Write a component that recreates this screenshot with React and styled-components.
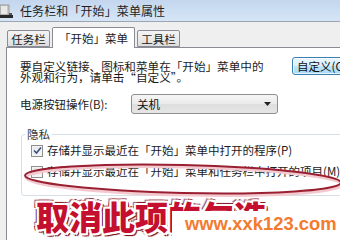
import React from 'react';
import styled, { createGlobalStyle } from 'styled-components';

const GlobalStyle = createGlobalStyle`
  html, body {
    margin: 0;
    padding: 0;
    background: #f0f0f0;
  }
  body {
    font-family: "Noto Sans CJK SC", "Liberation Sans", sans-serif;
  }
`;

const Window = styled.div`
  position: relative;
  width: 340px;
  height: 240px;
  overflow: hidden;
  background: #efefef;
  display: flex;
  flex-direction: column;
`;

const TitleBar = styled.div`
  height: 22px;
  flex: none;
  display: flex;
  align-items: center;
  gap: 6px;
  background: linear-gradient(180deg, #c3d6ee 0%, #cddff3 55%, #d6e5f5 100%);
  border-bottom: 1px solid #9aa6b4;
  box-sizing: border-box;
`;

const Title = styled.span`
  font-size: 12px;
  color: #1f1f1f;
  letter-spacing: 0.1px;
`;

const Body = styled.div`
  flex: 1;
  display: flex;
  flex-direction: column;
  padding: 5px 0 0 6px;
  min-height: 0;
`;

const TabRow = styled.div`
  display: flex;
  align-items: flex-end;
  height: 20px;
  padding-left: 1px;
  gap: 2px;
  position: relative;
  z-index: 1;
`;

const Tab = styled.div`
  box-sizing: border-box;
  height: ${(p) => (p.$active ? '21px' : '17px')};
  width: ${(p) => p.$w}px;
  margin-bottom: ${(p) => (p.$active ? '-1px' : '0')};
  border: 1px solid #898c95;
  border-bottom: ${(p) => (p.$active ? 'none' : '1px solid #898c95')};
  border-radius: 2px 2px 0 0;
  background: ${(p) =>
    p.$active ? '#ffffff' : 'linear-gradient(180deg, #f3f3f3 0%, #ebebeb 50%, #dddddd 100%)'};
  font-size: 11.5px;
  color: #1a1a1a;
  display: flex;
  align-items: center;
  justify-content: center;
  padding-top: ${(p) => (p.$active ? '0' : '1px')};
  white-space: nowrap;
`;

const Panel = styled.div`
  flex: 1;
  background: #ffffff;
  border: 1px solid #898c95;
  border-right: none;
  border-bottom: none;
  padding: 9px 0 0 13px;
  display: flex;
  flex-direction: column;
`;

const IntroRow = styled.div`
  display: flex;
  align-items: flex-start;
  justify-content: space-between;
`;

const IntroText = styled.div`
  padding-top: 4px;
  font-size: 11.6px;
  line-height: 10.5px;
  color: #1a1a1a;
  white-space: nowrap;
`;

const CustomButton = styled.div`
  box-sizing: border-box;
  width: 56px;
  height: 18px;
  margin-right: -8px;
  border: 1px solid #3c7fb1;
  border-radius: 3px;
  background: linear-gradient(180deg, #eaf6fd 0%, #d9f0fc 50%, #bee6fd 51%, #a7d9f5 100%);
  box-shadow: inset 0 0 0 1px rgba(255, 255, 255, 0.7);
  font-size: 11.5px;
  color: #111;
  display: flex;
  align-items: center;
  padding-left: 4px;
  white-space: nowrap;
`;

const PowerRow = styled.div`
  display: flex;
  align-items: center;
  margin-top: 12px;
  height: 20px;
`;

const Label = styled.span`
  width: 111px;
  font-size: 11.5px;
  color: #1a1a1a;
  white-space: nowrap;
`;

const Select = styled.div`
  box-sizing: border-box;
  width: 147px;
  height: 20px;
  border: 1px solid #8e8f8f;
  border-radius: 3px;
  background: linear-gradient(180deg, #f6f6f6 0%, #eaeaea 50%, #dedede 51%, #e6e6e6 100%);
  display: flex;
  align-items: center;
  justify-content: space-between;
  padding: 0 6px 0 5px;
  font-size: 11.5px;
  color: #111;
`;

const GroupBox = styled.fieldset`
  margin: 14px 0 0 1px;
  padding: 3px 0 17px 9px;
  width: 340px;
  border: 1px solid #d5dfe5;
  border-radius: 3px;
  display: flex;
  flex-direction: column;
  gap: 8px;
`;

const Legend = styled.legend`
  margin-left: -6px;
  padding: 0 2px;
  font-size: 11.5px;
  color: #333;
  line-height: 13px;
`;

const CheckRow = styled.label`
  display: flex;
  align-items: center;
  gap: 4px;
  font-size: 11.5px;
  line-height: 13px;
  color: #1a1a1a;
  white-space: nowrap;
`;

const Box = styled.span`
  box-sizing: border-box;
  width: 12px;
  height: 12px;
  flex: none;
  border: 1px solid #8f8f8f;
  background: linear-gradient(135deg, #e6e6e6 0%, #f8f8f8 100%);
  box-shadow: inset 0 0 0 1px #f4f4f4;
  display: flex;
  align-items: center;
  justify-content: center;
`;

const Ellipse = styled.svg`
  position: absolute;
  left: 0;
  top: 158px;
  width: 340px;
  height: 42px;
  pointer-events: none;
`;

const Annotation = styled.div`
  position: absolute;
  left: 36px;
  top: 198px;
  font-size: 33px;
  line-height: 36px;
  font-weight: 900;
  color: #c4102e;
  white-space: nowrap;
  text-shadow:
    2px 0 0 #fff, -2px 0 0 #fff, 0 2px 0 #fff, 0 -2px 0 #fff,
    2px 2px 0 #fff, -2px 2px 0 #fff, 2px -2px 0 #fff, -2px -2px 0 #fff,
    3px 1px 0 #7a1020, -3px 1px 0 #7a1020, 1px 3px 0 #7a1020, 1px -3px 0 #8a2030,
    3px 3px 1px #6a0c1a, -3px -3px 1px #a0505a;
`;

const Watermark = styled.div`
  position: absolute;
  left: 172px;
  top: 211px;
  right: 0;
  bottom: 0;
  background: #ffffff;
  padding: 3px 0 0 13px;
  font-family: "Liberation Sans", Arial, sans-serif;
  font-weight: bold;
  font-size: 18.4px;
  line-height: 20px;
  color: #f37b2f;
  white-space: nowrap;
`;

const AppIcon = () => (
  <svg width="14" height="16" viewBox="0 0 14 16">
    <rect x="0" y="2" width="9" height="10" fill="#c9c9c9" stroke="#9a9a9a" />
    <rect x="1" y="3" width="6" height="8" fill="#e8e8e8" />
    <rect x="0" y="12" width="13" height="3" fill="#2a2a2a" />
    <rect x="9" y="10" width="3" height="2" fill="#555" />
  </svg>
);

const Check = () => (
  <svg width="9" height="9" viewBox="0 0 9 9">
    <path d="M1 4.5 L3.5 7 L8 1.5" fill="none" stroke="#3b4f86" strokeWidth="1.6" />
  </svg>
);

const Arrow = () => (
  <svg width="7" height="4" viewBox="0 0 7 4">
    <path d="M0 0 H7 L3.5 4 Z" fill="#222" />
  </svg>
);

export default function App() {
  return (
    <Window>
      <GlobalStyle />
      <TitleBar>
        <AppIcon />
        <Title>任务栏和「开始」菜单属性</Title>
      </TitleBar>
      <Body>
        <TabRow>
          <Tab $w={43}>任务栏</Tab>
          <Tab $w={83} $active>「开始」菜单</Tab>
          <Tab $w={43}>工具栏</Tab>
        </TabRow>
        <Panel>
          <IntroRow>
            <IntroText>
              要自定义链接、图标和菜单在「开始」菜单中的
              <br />
              外观和行为，请单击“自定义”。
            </IntroText>
            <CustomButton>自定义(C)</CustomButton>
          </IntroRow>
          <PowerRow>
            <Label>电源按钮操作(B):</Label>
            <Select>
              <span>关机</span>
              <Arrow />
            </Select>
          </PowerRow>
          <GroupBox>
            <Legend>隐私</Legend>
            <CheckRow>
              <Box>
                <Check />
              </Box>
              存储并显示最近在「开始」菜单中打开的程序(P)
            </CheckRow>
            <CheckRow>
              <Box />
              存储并显示最近在「开始」菜单和任务栏中打开的项目(M)
            </CheckRow>
          </GroupBox>
        </Panel>
      </Body>
      <Ellipse viewBox="0 0 340 42">
        <g transform="rotate(1.3 183 21)">
          <ellipse cx="184" cy="23" rx="158" ry="14" fill="none" stroke="#f3c9cf" strokeWidth="3" />
          <ellipse cx="183" cy="21" rx="158" ry="14" fill="none" stroke="#9a1f30" strokeWidth="2" />
        </g>
      </Ellipse>
      <Annotation>取消此项的勾选</Annotation>
      <Watermark>www.xxk123.com</Watermark>
    </Window>
  );
}
